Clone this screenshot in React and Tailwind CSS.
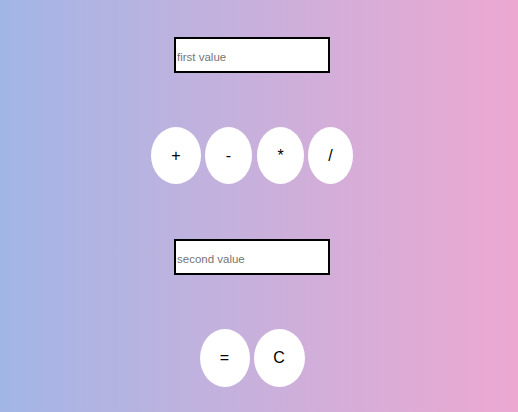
export default function App() {
  const ops = [
    { label: '+', w: 'w-[50px]', gap: '' },
    { label: '-', w: 'w-[47px]', gap: 'ml-[4px]' },
    { label: '*', w: 'w-[47px]', gap: 'ml-[5px]' },
    { label: '/', w: 'w-[45px]', gap: 'ml-[4px]' },
  ]

  return (
    <div
      className="w-[518px] h-[412px] overflow-hidden bg-linear-to-r from-[#a1b6e6] to-[#eca8d1] flex flex-col items-center pr-[14px] pt-[37px]"
      style={{ fontFamily: '"Liberation Sans", Arial, sans-serif' }}
    >
      <input
        type="text"
        placeholder="first value"
        className="w-[156px] h-[36px] border-2 border-black bg-white px-[1px] pt-[3px] text-[11.5px] text-black placeholder:text-[#757575] outline-none"
      />

      <div className="flex mt-[54px]">
        {ops.map((op) => (
          <button
            key={op.label}
            className={`${op.w} ${op.gap} h-[57px] rounded-[50%] bg-white text-[16px] text-black flex items-center justify-center`}
          >
            {op.label}
          </button>
        ))}
      </div>

      <input
        type="text"
        placeholder="second value"
        className="mt-[55px] w-[156px] h-[36px] border-2 border-black bg-white px-[1px] pt-[3px] text-[11.5px] text-black placeholder:text-[#757575] outline-none"
      />

      <div className="flex mt-[54px] gap-[4px]">
        <button className="w-[50px] h-[58px] rounded-[50%] bg-white text-[16px] text-black flex items-center justify-center">
          =
        </button>
        <button className="w-[51px] h-[58px] rounded-[50%] bg-white text-[16px] text-black flex items-center justify-center">
          C
        </button>
      </div>
    </div>
  )
}
